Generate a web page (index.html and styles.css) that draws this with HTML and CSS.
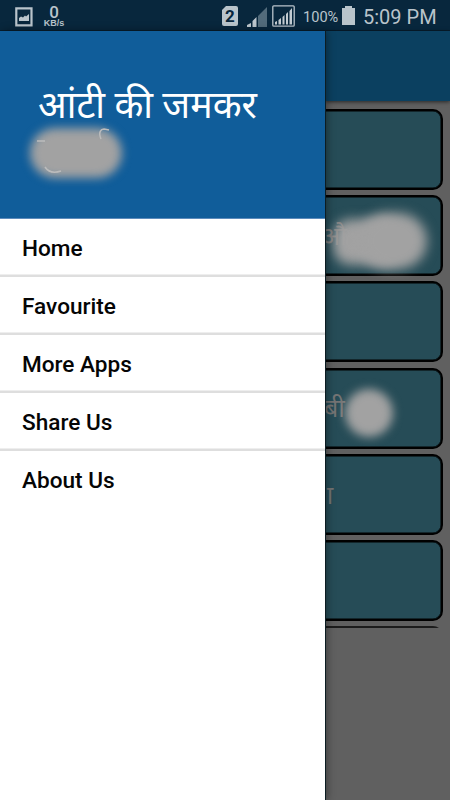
FILE: index.html
```html
<!DOCTYPE html>
<html lang="hi">
<head>
<meta charset="utf-8">
<title>Stories</title>
<link rel="stylesheet" href="styles.css">
</head>
<body>
<div class="screen">
  <header class="status">
    <svg class="picture" viewBox="0 0 18 20" width="18" height="20"><path fill="none" stroke="#b9c4cb" stroke-width="2.2" d="M1.3 1.3h15.2v17H1.3z"/><path fill="#b9c4cb" d="M4 14v-3l2-1.500 2 1 2-2 1 1 3-2.500v7z"/></svg>
    <div class="speed"><b>0</b><span>KB/s</span></div>
    <div class="sim">2</div>
    <svg class="signal" viewBox="0 0 20 20" width="20" height="20"><path fill="#526b7b" d="M20 0v20h-9V9z"/><path fill="#bdc7ce" d="M0 20v-2l4-2v4zM5.500 20v-6l4-4v10z"/></svg>
    <svg class="signal-box" viewBox="0 0 23 22" width="23" height="22"><rect x=".8" y=".8" width="21.4" height="20.4" rx="1" fill="none" stroke="#b9c4cb" stroke-width="1.3"/><path fill="#c3ccd2" d="M3 19.500v-2.500l2-1v3.500zM6.500 19.500v-4.500l2.500-2v6.500zM10.500 19.500v-7.500l2-2v9.500zM14 19.500V9l2-2v12.500zM17.500 19.500V6l2.500-3v16.500z"/></svg>
    <span class="percent">100%</span>
    <svg class="battery" viewBox="0 0 13 19" width="13" height="19"><path fill="#b9c4cb" d="M3 0h7v2h3v17H0V2h3z"/></svg>
    <time>5:09 PM</time>
  </header>
  <div class="body">
    <aside class="drawer">
      <div class="head"><h1>आंटी की जमकर</h1>
        <div class="smudge title-smudge"></div>
        <svg class="remnant" viewBox="0 0 76 48" width="76" height="48"><path fill="none" stroke="#bcbcbc" stroke-width="1.5" d="M0 13h8M64 11c-3-7 0-10 3-10l5 1M8 39c4 6 10 6 16 4"/></svg>
      </div>
      <nav><a>Home</a><a>Favourite</a><a>More Apps</a><a>Share Us</a><a>About Us</a></nav>
    </aside>
    <main class="page">
      <div class="appbar"></div>
      <div class="list">
        <div class="card"></div>
        <div class="card"><span class="word first">औ</span><i class="smudge wide"></i><i class="smudge tall"></i></div>
        <div class="card"></div>
        <div class="card"><span class="word second">बी</span><i class="smudge round"></i></div>
        <div class="card"><span class="word third">ा</span></div>
        <div class="card"></div>
        <div class="card"></div>
      </div>
    </main>
  </div>
</div>
</body>
</html>
```
FILE: styles.css
```css
* { box-sizing: border-box; }
body { margin: 0; font-family: Roboto, "Noto Sans", "Noto Sans Devanagari", sans-serif; }
.screen { width: 450px; height: 800px; overflow: hidden; background: #606060; display: flex; flex-direction: column; }
.status { height: 31px; flex: none; background: #08273d; border-bottom: 1px solid #071d2d; color: #b9c4cb; display: flex; align-items: flex-start; }
.picture { margin: 7px 0 0 15px; }
.speed { width: 22px; margin: 5px 0 0 10px; display: flex; flex-direction: column; align-items: center; }
.speed b { font: 500 17px/14px Roboto, sans-serif; }
.speed span { font: bold 9px/9px "Liberation Sans", sans-serif; }
.sim { margin: 6px 0 0 157px; width: 16px; height: 20px; border-radius: 2px; background: #b9c4cb; color: #08273d; font: bold 17px/21px Roboto, sans-serif; text-align: center; clip-path: polygon(4px 0, 100% 0, 100% 100%, 0 100%, 0 4px); }
.signal { margin: 7px 0 0 9px; }
.signal-box { margin: 5px 0 0 5px; }
.percent { width: 35px; margin: 8px 0 0 8px; font-size: 14.6px; line-height: 19px; white-space: nowrap; }
.battery { margin: 6px 0 0 4px; }
.status time { margin: 5px 0 0 8px; font-size: 20px; line-height: 24px; white-space: nowrap; }
.body { flex: 1; display: flex; min-height: 0; }
.drawer { width: 325px; flex: none; background: #fff; position: relative; z-index: 1; box-shadow: 1px 0 0 #0c1c22, 2px 0 8px rgba(0,0,0,.4); }
.head { height: 188px; background: #105d9a; border-bottom: 1px solid #5c8bbc; padding: 44px 0 0 38px; position: relative; }
.head h1 { margin: 0; color: #fff; font-size: 37.6px; font-weight: 400; line-height: 60px; white-space: nowrap; }
.smudge { position: absolute; background: #a2a2a2; filter: blur(5px); }
.title-smudge { left: 30px; top: 97px; width: 92px; height: 50px; border-radius: 26px; }
.remnant { position: absolute; left: 37px; top: 97px; }
nav { display: flex; flex-direction: column; }
nav a { height: 58.1px; padding: 0 22px; color: #050505; font-size: 22.6px; font-weight: 500; line-height: 59px; border-bottom: 2px solid #dedede; box-shadow: inset 0 -1px 0 #eee; }
nav a:first-child { height: 57.5px; }
nav a:last-child { border: 0; box-shadow: none; }
.page { flex: 1; display: flex; flex-direction: column; min-width: 0; }
.appbar { height: 70px; flex: none; background: #0b4060; box-shadow: 0 1px 4px rgba(0,0,0,.6); }
.list { height: 527px; padding: 8px 7.5px 0 0; display: flex; flex-direction: column; gap: 5.2px; overflow: hidden; }
.card { position: relative; flex: none; height: 81px; margin-left: -20px; background: #264c57; border: 2px solid #000; border-radius: 10px; box-shadow: inset 0 0 0 .5px #000; }
.card:last-child { opacity: .7; }
.word { position: absolute; color: #747474; font-size: 25px; line-height: 40px; }
.first { left: 14px; top: 20px; }
.second { left: 17px; top: 19px; }
.third { left: 5px; top: 20px; }
.wide { left: 26px; top: 22px; width: 70px; height: 46px; border-radius: 18px; filter: blur(6px); }
.tall { left: 52px; top: 16px; width: 68px; height: 56px; border-radius: 28px; filter: blur(6px); }
.round { left: 38px; top: 19px; width: 48px; height: 48px; border-radius: 50%; }
```
